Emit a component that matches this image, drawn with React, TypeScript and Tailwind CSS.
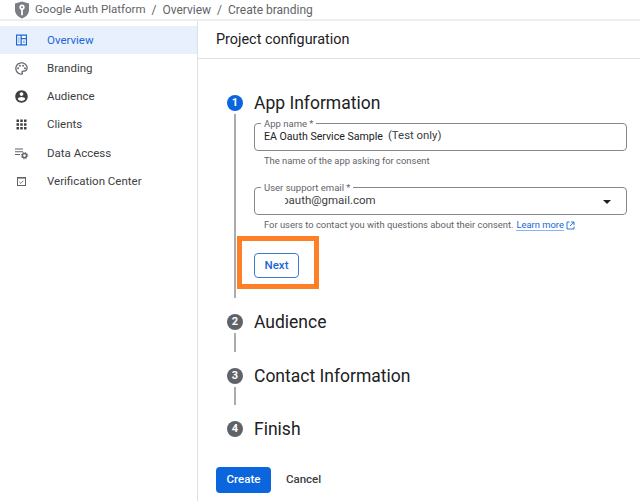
import React from "react";

function OverviewIcon() {
  return (
    <svg width="15" height="15" viewBox="0 0 15 15">
      <path d="M2 1.5h11v11H2z" fill="#1a66d6" />
      <path d="M3.2 2.7h3.3v8.6H3.2zM7.8 2.7h4v2.3h-4zM7.8 6.2h4v5.1h-4z" fill="#fff" />
      <path d="M4.3 4h1.2v6H4.3zM8.8 7.4h2v2.8h-2z" fill="#8db4ee" />
    </svg>
  );
}

function PaletteIcon() {
  return (
    <svg width="15" height="15" viewBox="0 0 24 24" fill="#5f6368">
      <path d="M12 22C6.49 22 2 17.51 2 12S6.49 2 12 2s10 4.04 10 9c0 3.31-2.69 6-6 6h-1.77c-.28 0-.5.22-.5.5 0 .12.05.23.13.33.41.47.64 1.06.64 1.67A2.5 2.5 0 0 1 12 22zm0-18c-4.41 0-8 3.59-8 8s3.59 8 8 8c.28 0 .5-.22.5-.5a.54.54 0 0 0-.14-.35c-.41-.46-.63-1.05-.63-1.65a2.5 2.5 0 0 1 2.5-2.5H16c2.21 0 4-1.79 4-4 0-3.86-3.59-7-8-7z" />
      <circle cx="6.5" cy="11.5" r="1.5" />
      <circle cx="9.5" cy="7.5" r="1.5" />
      <circle cx="14.5" cy="7.5" r="1.5" />
      <circle cx="17.5" cy="11.5" r="1.5" />
    </svg>
  );
}

function AccountIcon() {
  return (
    <svg width="15" height="15" viewBox="0 0 24 24" fill="#3c4043">
      <path d="M12 2C6.48 2 2 6.48 2 12s4.48 10 10 10 10-4.48 10-10S17.52 2 12 2zm0 3c1.66 0 3 1.34 3 3s-1.34 3-3 3-3-1.34-3-3 1.34-3 3-3zm0 14.2c-2.5 0-4.71-1.28-6-3.22.03-1.99 4-3.08 6-3.08 1.99 0 5.97 1.09 6 3.08-1.29 1.94-3.5 3.22-6 3.22z" />
    </svg>
  );
}

function AppsIcon() {
  return (
    <svg width="15" height="15" viewBox="0 0 24 24" fill="#3c4043">
      <path d="M4 8h4V4H4v4zm6 12h4v-4h-4v4zm-6 0h4v-4H4v4zm0-6h4v-4H4v4zm6 0h4v-4h-4v4zm6-10v4h4V4h-4zm-6 4h4V4h-4v4zm6 6h4v-4h-4v4zm0 6h4v-4h-4v4z" />
    </svg>
  );
}

function DataIcon() {
  return (
    <svg width="15" height="15" viewBox="0 0 15 15" fill="#5f6368">
      <path d="M1 2.5h8v1.1H1zM1 5.2h8v1.1H1zM1 7.9h5v1.1H1z" />
      <circle cx="10.5" cy="9.6" r="2.1" fill="none" stroke="#5f6368" strokeWidth="1.5" />
      <circle cx="10.5" cy="9.6" r="3.3" fill="none" stroke="#5f6368" strokeWidth="0.9" strokeDasharray="1.3 1.3" />
    </svg>
  );
}

function VerifyIcon() {
  return (
    <svg width="15" height="15" viewBox="0 0 15 15">
      <rect x="3.5" y="3.5" width="8" height="8" fill="none" stroke="#5f6368" strokeWidth="1" />
      <path d="M3 3h9v1.6H3z" fill="#5f6368" />
      <path d="M5.4 8l1.4 1.4 2.6-2.6" fill="none" stroke="#5f6368" strokeWidth="0.9" />
    </svg>
  );
}

function ShieldLogo() {
  return (
    <svg width="16" height="18" viewBox="0 0 16 18">
      <path d="M8 0.5 15 2.5V9c0 4-3 7-7 8.5C4 16 1 13 1 9V2.5z" fill="#7b7f84" />
      <circle cx="8" cy="6.2" r="2.6" fill="#fff" />
      <path d="M7.1 8h1.8v6.2H7.1z" fill="#fff" />
      <circle cx="8" cy="6.2" r="1" fill="#7b7f84" />
    </svg>
  );
}

const nav: { label: string; icon: React.ReactNode; active?: boolean }[] = [
  { label: "Overview", icon: <OverviewIcon />, active: true },
  { label: "Branding", icon: <PaletteIcon /> },
  { label: "Audience", icon: <AccountIcon /> },
  { label: "Clients", icon: <AppsIcon /> },
  { label: "Data Access", icon: <DataIcon /> },
  { label: "Verification Center", icon: <VerifyIcon /> },
];

function Step({
  n,
  title,
  active,
  line,
  children,
}: {
  n: number;
  title: string;
  active?: boolean;
  line?: boolean;
  children?: React.ReactNode;
}) {
  return (
    <div className="flex gap-[11px]">
      <div className="flex w-4 flex-col items-center pt-1">
        <div
          className={`flex h-4 w-4 shrink-0 items-center justify-center rounded-full text-[11px] font-bold text-white ${
            active ? "bg-[#0b65dc]" : "bg-[#5f6368]"
          }`}
        >
          {n}
        </div>
        {line && <div className="mb-[12px] mt-[3px] w-[1.5px] flex-1 bg-[#a9acb0]" />}
      </div>
      <div className="min-w-0 flex-1">
        <div className="h-6 text-[17.5px] leading-6 text-[#202124]">{title}</div>
        {children}
      </div>
    </div>
  );
}

function Field({ label, children }: { label: string; children: React.ReactNode }) {
  return (
    <div className="relative flex h-[28px] items-center rounded border border-[#85888c] bg-white">
      <span className="absolute -top-[6px] left-[6px] bg-white px-[3px] text-[9.5px] leading-3 text-[#5f6368]">
        {label}
      </span>
      {children}
    </div>
  );
}

export default function App() {
  return (
    <div className="flex h-[501px] w-[640px] flex-col overflow-hidden bg-white font-['Roboto',sans-serif]">
      <header className="flex h-[21px] shrink-0 items-center border-b-2 border-[#eeeeee] pl-[14px] text-[12px] text-[#5f6368]">
        <ShieldLogo />
        <span className="ml-[5px] text-[11.5px]">Google Auth Platform</span>
        <span className="mx-[6px]">/</span>
        <span>Overview</span>
        <span className="mx-[6px]">/</span>
        <span>Create branding</span>
      </header>
      <div className="flex min-h-0 flex-1">
        <aside className="w-[198px] shrink-0 border-r border-[#e0e0e0] pt-[5.3px]">
          {nav.map((item) => (
            <div
              key={item.label}
              className={`flex h-[28.2px] items-center pl-[14px] text-[11.5px] ${
                item.active ? "bg-[#e8f0fe] text-[#1a66d6]" : "text-[#3c4043]"
              }`}
            >
              <span className="flex w-[33px] shrink-0">{item.icon}</span>
              {item.label}
            </div>
          ))}
        </aside>
        <main className="flex min-w-0 flex-1 flex-col">
          <div className="flex h-[38px] shrink-0 items-center border-b border-[#e0e0e0] pl-[18px] text-[14.4px] text-[#202124]">
            Project configuration
          </div>
          <div className="flex flex-1 flex-col pl-[18px] pr-[13px] pt-[32px]">
            <div className="ml-[11px]">
              <Step n={1} title="App Information" active line>
                <div className="pb-[32px] pt-[8px]">
                  <Field label="App name *">
                    <span className="pl-[9px] text-[10.6px] text-[#202124]">EA Oauth Service Sample</span>
                    <span className="-translate-y-px pl-[5px] text-[11.4px] text-[#3c4043]">(Test only)</span>
                  </Field>
                  <p className="pl-[10px] pt-[4px] text-[9.4px] leading-[12px] text-[#5f6368]">
                    The name of the app asking for consent
                  </p>
                  <div className="h-[20px]" />
                  <Field label="User support email *">
                    <span className="ml-[27px] whitespace-nowrap text-[11.5px] text-[#3c4043] [clip-path:inset(0_0_0_3px)]">
                      oauth@gmail.com
                    </span>
                    <span className="absolute right-[15px] top-[12px] h-0 w-0 border-x-[4px] border-t-[4px] border-x-transparent border-t-[#202124]" />
                  </Field>
                  <p className="flex items-center pl-[10px] pt-[4px] text-[9.4px] leading-[12px] text-[#5f6368]">
                    For users to contact you with questions about their consent.
                    <a className="ml-[3px] border-b border-[#8ab4f8] leading-[10px] text-[#1a66d6]">Learn more</a>
                    <svg className="ml-[2px]" width="9" height="9" viewBox="0 0 9 9" fill="none" stroke="#1a66d6" strokeWidth="0.9">
                      <path d="M3.5 1H1v7h7V5.5M5 1h3v3M8 1 4 5" />
                    </svg>
                  </p>
                  <div className="relative mt-[22px] w-fit">
                    <button className="flex h-[25px] w-[45px] items-center justify-center rounded border border-[#3a7bd5] bg-white text-[11.5px] font-medium text-[#1a66d6]">
                      Next
                    </button>
                    <div className="absolute -left-[17px] -top-[17px] h-[53px] w-[82px] border-[5px] border-[#ff7f27]" />
                  </div>
                </div>
              </Step>
              <Step n={2} title="Audience" line>
                <div className="h-[30px]" />
              </Step>
              <Step n={3} title="Contact Information" line>
                <div className="h-[29px]" />
              </Step>
              <Step n={4} title="Finish" />
            </div>
            <div className="mt-[26px] flex items-center">
              <button className="h-[26px] w-[55px] rounded bg-[#0b65dc] text-[11.5px] font-medium text-white">Create</button>
              <button className="ml-[15px] text-[11.5px] font-medium text-[#3c4043]">Cancel</button>
            </div>
          </div>
        </main>
      </div>
    </div>
  );
}
